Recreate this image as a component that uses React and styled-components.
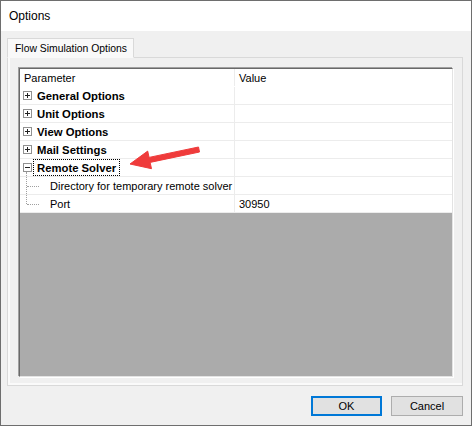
import React from "react";
import styled, { createGlobalStyle } from "styled-components";

const GlobalStyle = createGlobalStyle`
  html, body {
    margin: 0;
    padding: 0;
    background: #f0f0f0;
  }
  * {
    box-sizing: border-box;
  }
`;

const Window = styled.div`
  position: relative;
  display: flex;
  flex-direction: column;
  width: 472px;
  height: 426px;
  border: 1px solid #6e6e6e;
  font-family: "Liberation Sans", Arial, sans-serif;
  color: #000;
  overflow: hidden;
`;

const TitleBar = styled.div`
  display: flex;
  align-items: center;
  height: 30px;
  padding-left: 8px;
  background: #fff;
  font-size: 12px;
`;

const Body = styled.div`
  flex: 1;
  display: flex;
  flex-direction: column;
  padding: 7px 8px 8px 6px;
  background: #f0f0f0;
`;

const TabStrip = styled.div`
  display: flex;
  height: 20px;
  margin-bottom: -1px;
  position: relative;
  z-index: 1;
`;

const Tab = styled.div`
  display: flex;
  align-items: center;
  width: 127px;
  padding-left: 7px;
  border: 1px solid #d9d9d9;
  border-bottom: 1px solid #f9f9f9;
  background: #f9f9f9;
  font-size: 10.4px;
`;

const Panel = styled.div`
  display: flex;
  height: 329px;
  padding: 10px 9px 8px 11px;
  border: 1px solid #d9d9d9;
  background: #f0f0f0;
  box-shadow: inset 2px -2px 0 #fafafa;
`;

const Grid = styled.div`
  flex: 1;
  display: flex;
  flex-direction: column;
  border: 1px solid;
  border-color: #696969 #e3e3e3 #e3e3e3 #696969;
  box-shadow: -1px -1px 0 #a0a0a0, 1px 1px 0 #fff;
  background: #ababab;
  font-size: 11px;
`;

const Row = styled.div`
  display: grid;
  grid-template-columns: 215px 1fr;
  height: 18px;
  background: #fff;
  border-bottom: 1px solid ${(p) => (p.$header ? "#fff" : "#ececec")};
`;

const ParamCell = styled.div`
  display: flex;
  align-items: stretch;
  padding-left: ${(p) => (p.$text ? "4px" : "3px")};
  border-right: 1px solid #ececec;
  white-space: nowrap;
  overflow: hidden;
  ${(p) => p.$text && "align-items: center;"}
`;

const ValueCell = styled.div`
  display: flex;
  align-items: center;
  padding-left: 4px;
`;

const BoxSlot = styled.span`
  display: flex;
  align-items: center;
  width: 10px;
  position: relative;

  &::after {
    content: "";
    display: ${(p) => (p.$open ? "block" : "none")};
    position: absolute;
    left: 3px;
    top: 13px;
    bottom: 0;
    border-left: 1px dotted #a0a0a0;
  }
`;

const Label = styled.span`
  display: flex;
  align-items: center;
  padding: 0 3px;
  border: 1px dotted ${(p) => (p.$focus ? "#000" : "transparent")};
  font-weight: bold;
  font-size: 11.3px;
`;

const Connector = styled.span`
  position: relative;
  width: 26px;
  flex: none;

  &::before {
    content: "";
    position: absolute;
    left: 3px;
    top: 0;
    height: ${(p) => (p.$last ? "50%" : "100%")};
    border-left: 1px dotted #a0a0a0;
  }

  &::after {
    content: "";
    position: absolute;
    left: 4px;
    width: 12px;
    top: 50%;
    border-top: 1px dotted #a0a0a0;
  }
`;

const ChildText = styled.span`
  display: flex;
  align-items: center;
  padding-left: 1px;
`;

const Footer = styled.div`
  display: flex;
  justify-content: flex-end;
  gap: 9px;
  margin-top: 10px;
`;

const Button = styled.div`
  display: flex;
  align-items: center;
  justify-content: center;
  width: ${(p) => p.$w}px;
  height: 20px;
  background: #e1e1e1;
  border: ${(p) => (p.$default ? "2px solid #0078d7" : "1px solid #adadad")};
  font-size: 11px;
`;

const Arrow = styled.svg`
  position: absolute;
  left: 125px;
  top: 141px;
`;

const ExpandBox = ({ open }) => (
  <svg width="9" height="9" viewBox="0 0 9 9">
    <rect x="0.5" y="0.5" width="8" height="8" fill="#fff" stroke="#919191" />
    <line x1="2" y1="4.5" x2="7" y2="4.5" stroke="#222" />
    {!open && <line x1="4.5" y1="2" x2="4.5" y2="7" stroke="#222" />}
  </svg>
);

const groups = [
  { name: "General Options" },
  { name: "Unit Options" },
  { name: "View Options" },
  { name: "Mail Settings" },
  { name: "Remote Solver", open: true, focus: true },
];

const children = [
  { name: "Directory for temporary remote solver", value: "" },
  { name: "Port", value: "30950" },
];

export default function App() {
  return (
    <>
      <GlobalStyle />
      <Window>
        <TitleBar>Options</TitleBar>
        <Body>
          <TabStrip>
            <Tab>Flow Simulation Options</Tab>
          </TabStrip>
          <Panel>
            <Grid>
              <Row $header>
                <ParamCell $text>Parameter</ParamCell>
                <ValueCell>Value</ValueCell>
              </Row>
              {groups.map((g) => (
                <Row key={g.name}>
                  <ParamCell>
                    <BoxSlot $open={g.open}>
                      <ExpandBox open={g.open} />
                    </BoxSlot>
                    <Label $focus={g.focus}>{g.name}</Label>
                  </ParamCell>
                  <ValueCell />
                </Row>
              ))}
              {children.map((c, i) => (
                <Row key={c.name}>
                  <ParamCell>
                    <Connector $last={i === children.length - 1} />
                    <ChildText>{c.name}</ChildText>
                  </ParamCell>
                  <ValueCell>{c.value}</ValueCell>
                </Row>
              ))}
            </Grid>
          </Panel>
          <Footer>
            <Button $w={71} $default>OK</Button>
            <Button $w={72}>Cancel</Button>
          </Footer>
        </Body>
        <Arrow width="78" height="32" viewBox="0 0 78 32">
          <polygon
            points="4,22 25.5,26.7 24.1,20.4 73.5,10 72.5,5 23.1,15.4 21.7,9.1"
            fill="#ef3b3b"
            stroke="#ef3b3b"
            strokeWidth="1"
            strokeLinejoin="round"
          />
        </Arrow>
      </Window>
    </>
  );
}
